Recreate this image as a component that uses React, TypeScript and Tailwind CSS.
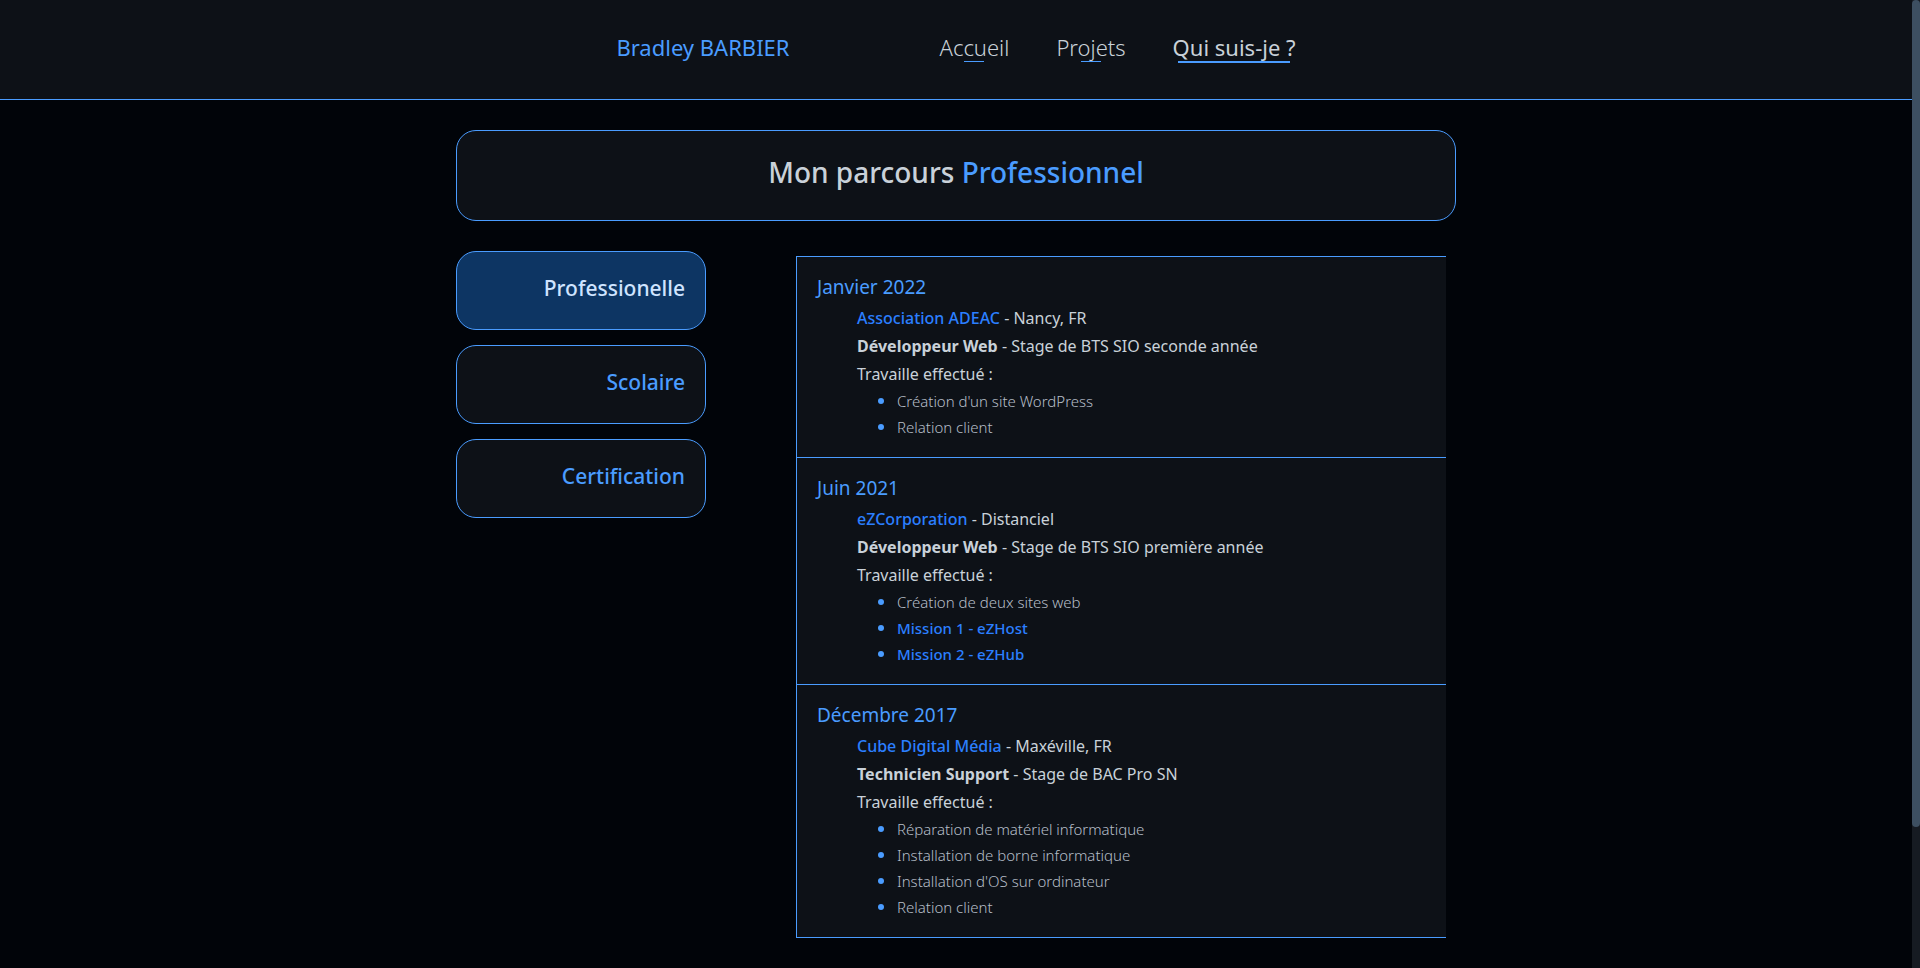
import type { ReactNode } from 'react';

type Task = { label: string; href?: string };
type Entry = { date: string; company: string; place: string; role: string; detail: string; tasks: Task[] };

const entries: Entry[] = [
  {
    date: 'Janvier 2022', company: 'Association ADEAC', place: 'Nancy, FR',
    role: 'Développeur Web', detail: 'Stage de BTS SIO seconde année',
    tasks: [{ label: "Création d'un site WordPress" }, { label: 'Relation client' }],
  },
  {
    date: 'Juin 2021', company: 'eZCorporation', place: 'Distanciel',
    role: 'Développeur Web', detail: 'Stage de BTS SIO première année',
    tasks: [
      { label: 'Création de deux sites web' },
      { label: 'Mission 1 - eZHost', href: '#ezhost' },
      { label: 'Mission 2 - eZHub', href: '#ezhub' },
    ],
  },
  {
    date: 'Décembre 2017', company: 'Cube Digital Média', place: 'Maxéville, FR',
    role: 'Technicien Support', detail: 'Stage de BAC Pro SN',
    tasks: [
      { label: 'Réparation de matériel informatique' },
      { label: 'Installation de borne informatique' },
      { label: "Installation d'OS sur ordinateur" },
      { label: 'Relation client' },
    ],
  },
];

function NavLink({ active, children }: { active?: boolean; children: ReactNode }) {
  return (
    <a
      href="#"
      aria-current={active ? 'page' : undefined}
      className={`flex flex-col items-center text-[22px] leading-7 ${active ? 'font-normal' : 'font-light'}`}
    >
      <span>{children}</span>
      <span className={active ? 'h-0.5 w-11/12 bg-[#4a9cff]' : 'h-px w-5 bg-[#4a9cff]'} />
    </a>
  );
}

function Tab({ active, children }: { active?: boolean; children: ReactNode }) {
  return (
    <button
      type="button"
      aria-pressed={!!active}
      className={`h-[79px] w-full rounded-[20px] border border-[#4a9cff] px-5 pb-1 text-right text-[21px] font-medium ${
        active ? 'bg-[#0d3563] text-[#cfe4ff]' : 'bg-[#0d1117] text-[#4a9cff]'
      }`}
    >
      {children}
    </button>
  );
}

function TimelineEntry({ entry }: { entry: Entry }) {
  return (
    <article className="border-b border-[#4a9cff] px-5 pt-4 pb-[17px]">
      <h2 className="text-[19px] leading-7 text-[#4a9cff]">{entry.date}</h2>
      <div className="pt-[3px] pl-10 leading-7">
        <p><a href="#" className="font-medium text-[#2b7fff]">{entry.company}</a> - {entry.place}</p>
        <p><strong className="font-bold">{entry.role}</strong> - {entry.detail}</p>
        <p>Travaille effectué :</p>
        <ul className="list-disc pl-10 text-[15px] leading-[26px] font-light text-[#b6bec8] marker:text-lg marker:leading-none marker:text-[#4a9cff]">
          {entry.tasks.map((t) => (
            <li key={t.label}>
              {t.href ? <a href={t.href} className="font-medium text-[#2b7fff]">{t.label}</a> : t.label}
            </li>
          ))}
        </ul>
      </div>
    </article>
  );
}

export default function App() {
  return (
    <div className="flex h-screen overflow-hidden bg-[#010409] font-['Noto_Sans',sans-serif] text-base text-[#c9d1d9]">
      <div className="min-w-0 flex-1">
        <header className="flex items-start justify-center gap-[150px] border-b border-[#4a9cff] bg-[#0d1117] pt-[33px] pb-9">
          <a href="#" className="text-[22px] leading-7 text-[#4a9cff]">Bradley BARBIER</a>
          <nav className="flex gap-[47px]">
            <NavLink>Accueil</NavLink>
            <NavLink>Projets</NavLink>
            <NavLink active>Qui suis-je ?</NavLink>
          </nav>
        </header>
        <main className="mx-auto max-w-[1000px] pt-[30px]">
          <h1 className="rounded-[20px] border border-[#4a9cff] bg-[#0d1117] pt-[21px] pb-7 text-center text-[28px] leading-10 font-medium">
            Mon parcours <span className="text-[#4a9cff]">Professionnel</span>
          </h1>
          <div className="flex items-start justify-between pt-[30px]">
            <div className="flex w-1/4 flex-col gap-[15px]">
              <Tab active>Professionelle</Tab>
              <Tab>Scolaire</Tab>
              <Tab>Certification</Tab>
            </div>
            <section className="mt-[5px] mr-2.5 w-[65%] border-t border-l border-[#4a9cff] bg-[#0d1117]">
              {entries.map((e) => <TimelineEntry key={e.date} entry={e} />)}
            </section>
          </div>
        </main>
      </div>
      <div aria-hidden="true" className="w-2 bg-[#161b22]">
        <div className="h-[85.4%] rounded-full bg-[#3d4f61]" />
      </div>
    </div>
  );
}
